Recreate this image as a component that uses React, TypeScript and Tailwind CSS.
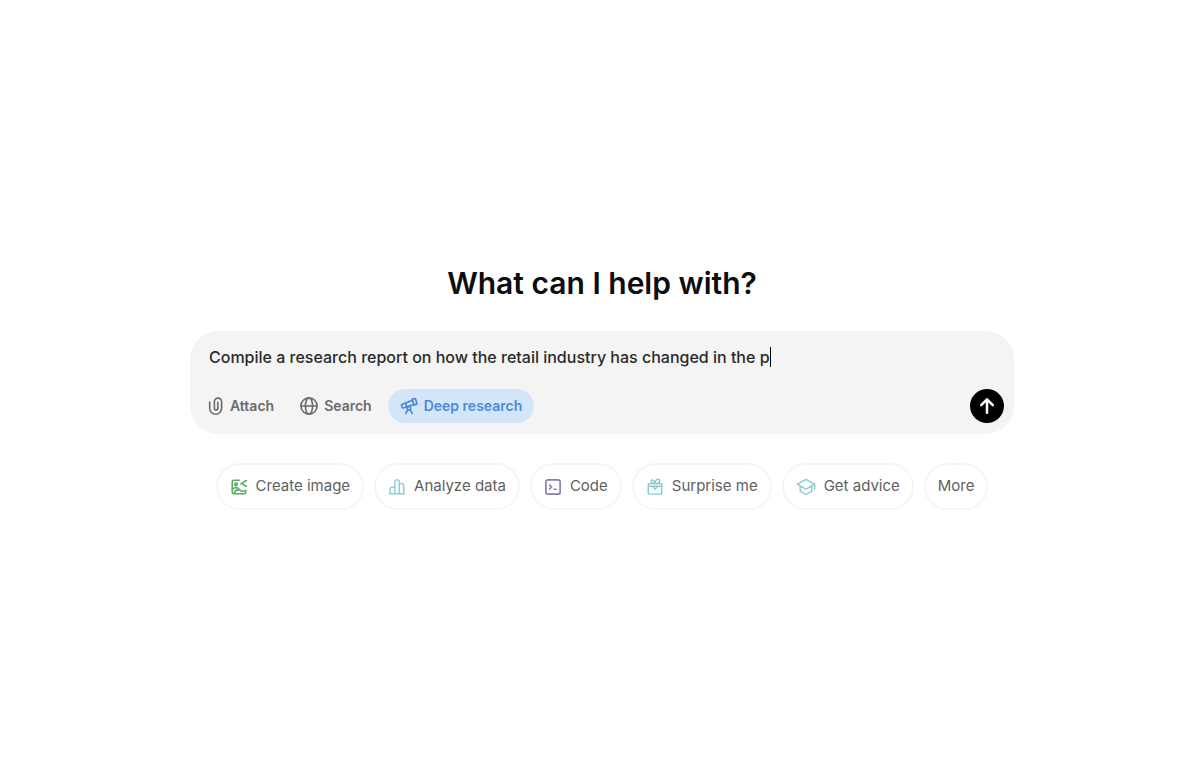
import { useState } from "react";
import type { ReactNode } from "react";

const iconProps = {
  fill: "none",
  stroke: "currentColor",
  strokeLinecap: "round",
  strokeLinejoin: "round",
  viewBox: "0 0 24 24",
  "aria-hidden": true,
} as const;

function AttachIcon() {
  return (
    <svg {...iconProps} viewBox="0 0 16 20" strokeWidth={1.8} className="h-[18px] w-4 shrink-0">
      <path d="M1 5.5v7a6.6 6.6 0 0 0 13.2 0V5.2a4 4 0 0 0-8 0v7.2a1.9 1.9 0 0 0 3.8 0V6" />
    </svg>
  );
}

function GlobeIcon() {
  return (
    <svg {...iconProps} strokeWidth={2.2} className="size-[18px] shrink-0">
      <circle cx="12" cy="12" r="10.8" />
      <ellipse cx="12" cy="12" rx="4.8" ry="10.8" />
      <path d="M1.2 12h21.6" />
    </svg>
  );
}

function TelescopeIcon() {
  return (
    <svg {...iconProps} strokeWidth={2.2} className="size-[18px] shrink-0">
      <path d="M16.2 3.2l3.1-1.1a1 1 0 0 1 1.3.6l2 5.7a1 1 0 0 1-.6 1.3l-3.1 1.1z" />
      <path d="M16.6 4.5L7.3 8l1.9 5.2 9.2-3.3" />
      <path d="M7.3 8l-4.6 1.9a1.2 1.2 0 0 0-.7 1.5l.9 2.5a1.2 1.2 0 0 0 1.5.7l4.8-1.5" />
      <circle cx="12" cy="15" r="2.3" />
      <path d="M10.6 17l-3.1 5M13.4 17l3.1 5" />
    </svg>
  );
}

function ArrowIcon() {
  return (
    <svg {...iconProps} strokeWidth={3} className="size-5">
      <path d="M12 20V4.5M5 11l7-7 7 7" />
    </svg>
  );
}

function ImageIcon() {
  return (
    <svg {...iconProps} strokeWidth={2.2} className="size-[18px] shrink-0 text-[#5fae68]">
      <path d="M12.5 3H5a2 2 0 0 0-2 2v14a2 2 0 0 0 2 2h14a2 2 0 0 0 2-2v-1.5" />
      <path d="M22 3.5c-3.5 0-4 4-7.5 4M22 11c-3.5 0-4-3.5-7.5-3.5" />
      <circle cx="8" cy="8.5" r="1.6" />
      <path d="M3 15c4-3 7-2.5 9 0s5 4 9 1.5M5.5 20.5c1-3.5 3.5-5 7-4.5" />
    </svg>
  );
}

function ChartIcon() {
  return (
    <svg {...iconProps} strokeWidth={1.9} className="size-[18px] shrink-0 text-[#8fcbdc]">
      <path d="M3 21v-7a1.5 1.5 0 0 1 1.5-1.5H9V21zM9 21V5a2.5 2.5 0 0 1 2.5-2.5h1A2.5 2.5 0 0 1 15 5v16zM15 7.5h3.500A2.5 2.5 0 0 1 21 10v11h-6M2 21h20" />
    </svg>
  );
}

function CodeIcon() {
  return (
    <svg {...iconProps} strokeWidth={2.2} className="size-[18px] shrink-0 text-[#8b7bb5]">
      <rect x="2.5" y="2.5" width="19" height="19" rx="2.5" />
      <path d="M7.5 9.5l2.5 2.5-2.5 2.5M13.5 15H16" />
    </svg>
  );
}

function GiftIcon() {
  return (
    <svg {...iconProps} strokeWidth={1.9} className="size-[18px] shrink-0 text-[#87ccd3]">
      <path d="M3 11h18v9a1.5 1.5 0 0 1-1.5 1.5h-15A1.5 1.5 0 0 1 3 20zM3 11V7.500h18V11" />
      <path d="M12 7.5C8 7.5 6 5.5 7 3.5s4-.5 5 4c0-4.500 2.500-6.500 5-5.500s2 5.500-5 5.500zM9 11.5l3 3.500 3-3.500" />
    </svg>
  );
}

function CapIcon() {
  return (
    <svg {...iconProps} strokeWidth={1.7} className="size-5 shrink-0 text-[#8fcbd0]">
      <path d="M12 3L1.500 8.500 12 14.500l10.500-6zM5 11v6l7 4 7-4v-6M22.500 8.500V14" />
    </svg>
  );
}

const suggestions: { label: string; icon?: ReactNode }[] = [
  { label: "Create image", icon: <ImageIcon /> },
  { label: "Analyze data", icon: <ChartIcon /> },
  { label: "Code", icon: <CodeIcon /> },
  { label: "Surprise me", icon: <GiftIcon /> },
  { label: "Get advice", icon: <CapIcon /> },
  { label: "More" },
];

export default function App() {
  const [prompt, setPrompt] = useState(
    "Compile a research report on how the retail industry has changed in the p"
  );
  const [deepResearch, setDeepResearch] = useState(true);

  return (
    <main className="flex min-h-screen flex-col items-center justify-center bg-white pt-[13px] pr-4 pl-5 font-['Inter',sans-serif]">
      <h1 className="text-center text-3xl leading-10 font-semibold text-[#0d0d0d]">
        What can I help with?
      </h1>

      <form
        className="mt-7 w-full max-w-[824px] rounded-[28px] bg-[#f4f4f4] px-2 pt-3 pb-[11px]"
        onSubmit={(e) => e.preventDefault()}
      >
        <div className="flex items-center px-[11px]">
          <input
            type="text"
            aria-label="Message"
            value={prompt}
            onChange={(e) => setPrompt(e.target.value)}
            className="h-7 max-w-full min-w-0 [field-sizing:content] bg-transparent text-base font-medium text-[#2a2a2a] caret-transparent outline-none"
          />
          <span className="h-5 w-px shrink-0 bg-black" />
        </div>

        <div className="mt-[18px] flex items-center gap-1.5 text-sm font-semibold text-[#6b6b6b]">
          <button type="button" className="flex h-[34px] items-center gap-1.5 rounded-full px-2.5">
            <AttachIcon />
            Attach
          </button>
          <button type="button" className="flex h-[34px] items-center gap-1.5 rounded-full px-2.5">
            <GlobeIcon />
            Search
          </button>
          <button
            type="button"
            aria-pressed={deepResearch}
            onClick={() => setDeepResearch(!deepResearch)}
            className={`flex h-[34px] items-center gap-1.5 rounded-full px-3 ${
              deepResearch ? "bg-[#d3e5f9] text-[#4a8bd6]" : ""
            }`}
          >
            <TelescopeIcon />
            Deep research
          </button>
          <button
            type="submit"
            aria-label="Send"
            className="mr-0.5 ml-auto flex size-[34px] items-center justify-center rounded-full bg-black text-white"
          >
            <ArrowIcon />
          </button>
        </div>
      </form>

      <div className="mt-[29px] flex flex-wrap justify-center gap-2.5">
        {suggestions.map((item) => (
          <button
            key={item.label}
            type="button"
            className="flex h-[47px] items-center gap-2 rounded-full border-2 border-[#f5f5f5] px-3 text-[15px] text-[#5f5f5f]"
          >
            {item.icon}
            {item.label}
          </button>
        ))}
      </div>
    </main>
  );
}
